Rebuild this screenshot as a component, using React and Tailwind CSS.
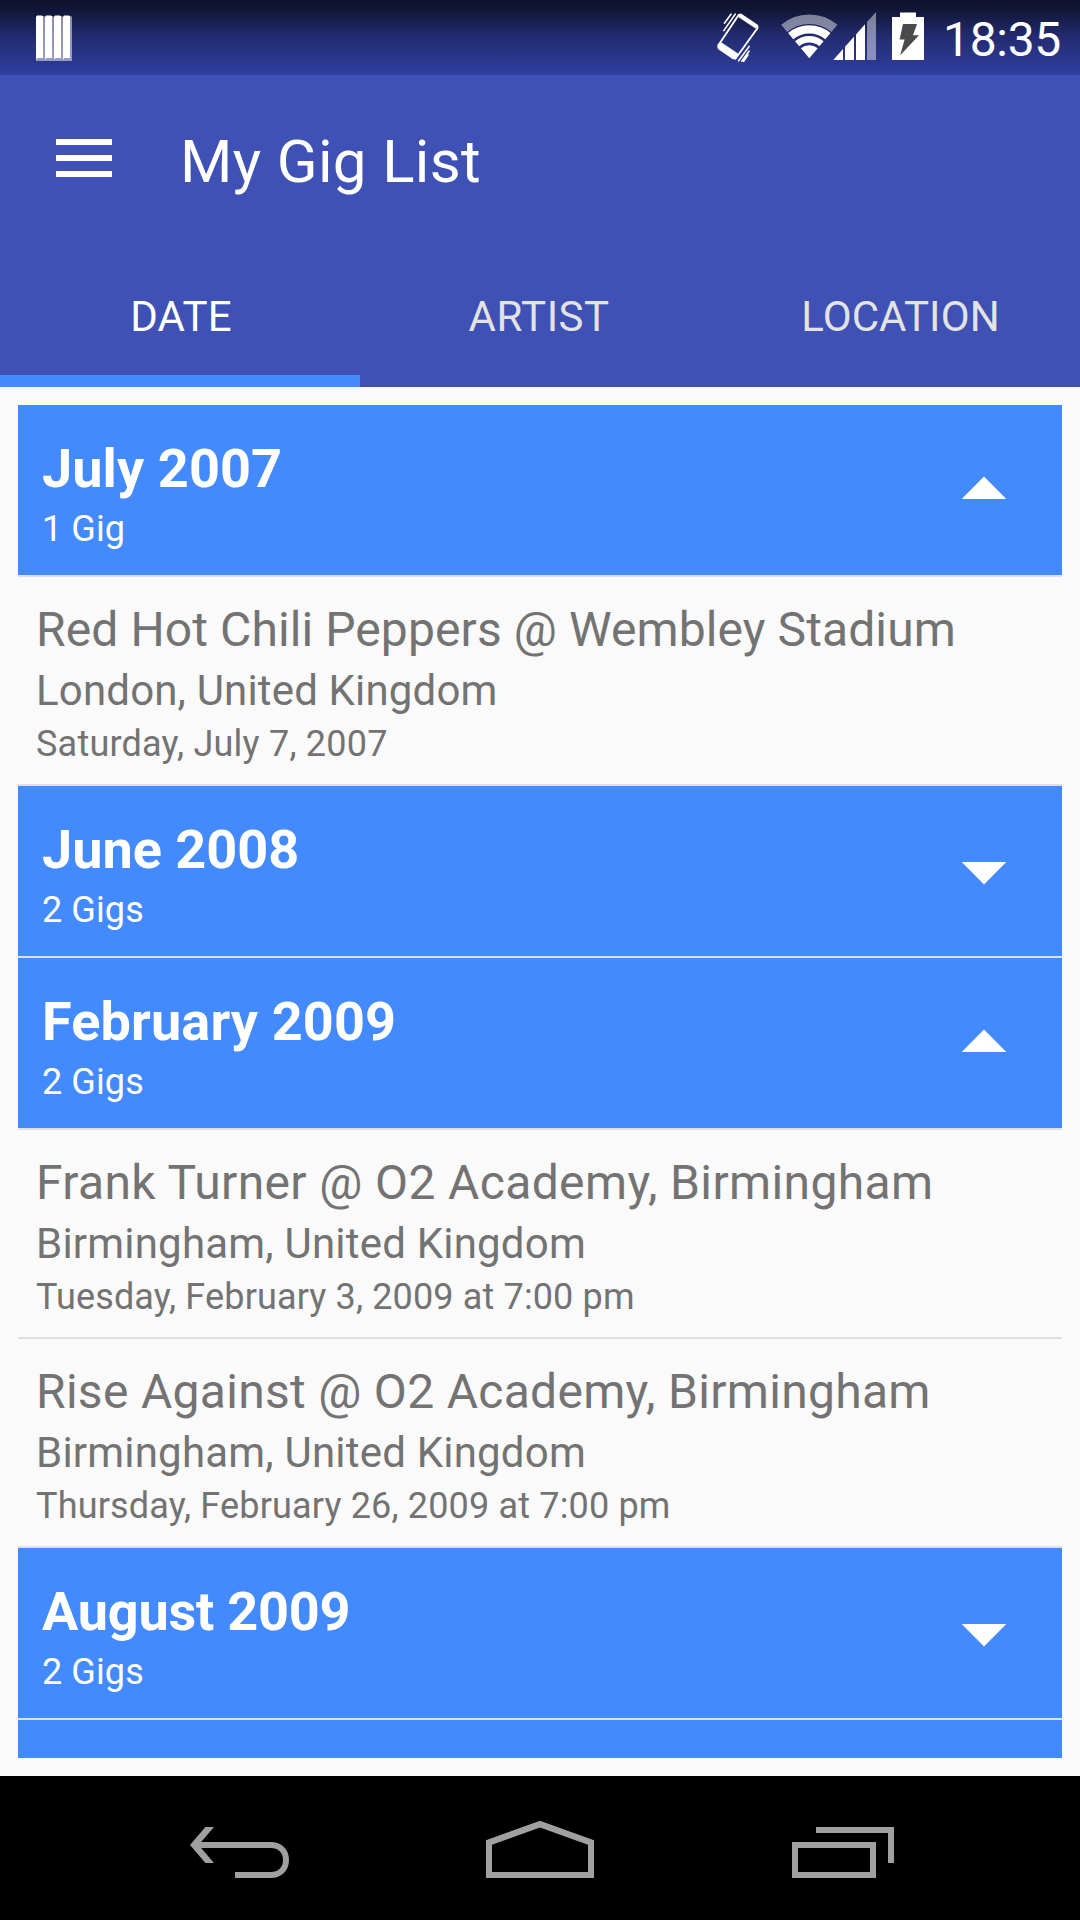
const groups = [
  { title: "July 2007", tracking: "tracking-[0.1px]", count: "1 Gig", open: true, gigs: [
    { name: "Red Hot Chili Peppers @ Wembley Stadium", nameTracking: "tracking-[0.1px]", place: "London, United Kingdom", placeTracking: "tracking-[0.17px]", date: "Saturday, July 7, 2007", dateTracking: "tracking-[0.22px]" },
  ] },
  { title: "June 2008", tracking: "tracking-[0px]", count: "2 Gigs", open: false, gigs: [] },
  { title: "February 2009", tracking: "tracking-[0.14px]", count: "2 Gigs", open: true, gigs: [
    { name: "Frank Turner @ O2 Academy, Birmingham", nameTracking: "tracking-[0.37px]", place: "Birmingham, United Kingdom", placeTracking: "tracking-[0.21px]", date: "Tuesday, February 3, 2009 at 7:00 pm", dateTracking: "tracking-[0.14px]" },
    { name: "Rise Against @ O2 Academy, Birmingham", nameTracking: "tracking-[0.3px]", place: "Birmingham, United Kingdom", placeTracking: "tracking-[0.21px]", date: "Thursday, February 26, 2009 at 7:00 pm", dateTracking: "tracking-[0.16px]" },
  ] },
  { title: "August 2009", tracking: "tracking-[-0.22px]", count: "2 Gigs", open: false, gigs: [] },
];

const tabs = [
  { label: "DATE", active: true, tracking: "tracking-[0.15px] pl-0.5" },
  { label: "ARTIST", active: false, tracking: "tracking-[0.45px] pr-0.5" },
  { label: "LOCATION", active: false, tracking: "tracking-[0.1px] pl-px" },
];

function BarsIcon() {
  return (
    <svg className="mt-[15px] h-[46px] w-9" viewBox="0 0 36 46">
      {[0, 9, 18, 27].map((x) => (
        <g key={x}>
          <path d={`M${x + 1} 1H${x + 8}L${x + 9} 2V46H${x}V44Z`} fill="#fff" fillOpacity="0.5" />
          <path d={`M${x + 1} 0.5H${x + 6}L${x + 7} 1.5V43H${x + 1.5}L${x} 44.5V2Z`} fill="#fff" />
        </g>
      ))}
    </svg>
  );
}

function VibrateIcon() {
  return (
    <svg className="h-[75px] w-12" viewBox="714 0 48 75" fill="none" stroke="#fff" strokeLinejoin="round">
      <path d="M740.8 14.6L757.2 25.6L757.6 28L735.8 58.2L733.5 58.2L718.6 47.8L718.4 45.2L738.6 15Z" strokeWidth="1.9" />
      <path d="M740 14.2L757.6 26L755.6 27.8L739 16.8Z" fill="#fff" strokeWidth="1.2" />
      <path d="M718.2 45L721.6 43.2L738 54.2L735.6 58.8L732.6 58.2L718.4 48.4Z" fill="#fff" strokeWidth="1.2" />
      <path d="M731 14.2L724.4 23.2M735.2 14.2L723.8 30.6" strokeWidth="1.6" strokeLinecap="round" />
      <path d="M749.2 46.4L738.6 60.8M749 51.2L741.8 61.2M748 54.8L743.6 61.4" strokeWidth="1.6" strokeLinecap="round" />
    </svg>
  );
}

function NetworkIcons() {
  return (
    <svg className="ml-[18px] h-[75px] w-[97px]" viewBox="780 0 97 75" fill="none" stroke="#fff">
      <path d="M784.2 28.4A39 39 0 0 1 834.4 28.4" strokeWidth="9.4" strokeOpacity="0.45" />
      <path d="M790.7 36.1A29 29 0 0 1 827.9 36.1" strokeWidth="8.2" />
      <path d="M797.1 43.7A19 19 0 0 1 821.5 43.7" strokeWidth="6.6" />
      <path d="M809.3 58.3L800.9 48.3A13 13 0 0 1 817.7 48.3Z" fill="#fff" stroke="none" />
      <g fill="#fff" stroke="none">
        <path d="M833.3 60L843 49.1V60Z" />
        <path d="M845 46.8L854 36.7V60H845Z" />
        <path d="M856 34.5L865 24.3V60H856Z" />
        <path d="M867 22.1L876 12V60H867Z" fillOpacity="0.45" />
      </g>
    </svg>
  );
}

function BatteryIcon() {
  return (
    <svg className="ml-[15px] h-[75px] w-8" viewBox="892 0 32 75">
      <path d="M900 12.5H916V17H924V60H892V17H900Z" fill="#fff" />
      <path d="M903 24H917L913 35.2H919L900.2 55.3L904.6 39.4H899.6Z" fill="#4a4a4a" />
    </svg>
  );
}

function Group({ group }) {
  return (
    <>
      <div className="flex h-[172px] shrink-0 justify-between border-b-2 border-[#e0e0e0] bg-[#448aff] pl-6 text-white">
        <div className="pt-8">
          <h2 className={`text-[54px] leading-[64px] font-bold ${group.tracking}`}>{group.title}</h2>
          <p className="mt-[7px] text-[36px] leading-[42px] tracking-[0.1px]">{group.count}</p>
        </div>
        <svg className={group.open ? "mt-[71px] mr-[55px] h-[23px] w-[46px]" : "mt-[76px] mr-[55px] h-[23px] w-[46px]"} viewBox="0 0 46 23" fill="#fff">
          <path d={group.open ? "M0.7 23L23 0.5L45.3 23Z" : "M0.7 0H45.3L23 22.5Z"} />
        </svg>
      </div>
      {group.gigs.map((gig) => (
        <div key={gig.name} className="h-[209px] shrink-0 border-b-2 border-[#e0e0e0] pt-[25px] pl-[18px] whitespace-nowrap text-[#737373]">
          <h3 className={`text-[48px] leading-[56px] ${gig.nameTracking}`}>{gig.name}</h3>
          <p className={`mt-2 text-[42px] leading-[50px] ${gig.placeTracking}`}>{gig.place}</p>
          <p className={`mt-[7px] text-[36px] leading-[42px] ${gig.dateTracking}`}>{gig.date}</p>
        </div>
      ))}
    </>
  );
}

export default function App() {
  return (
    <div className="flex h-[1920px] w-[1080px] flex-col overflow-hidden bg-[#fafafa] font-[Roboto,sans-serif]">
      <div className="flex h-[75px] shrink-0 justify-between bg-linear-to-b from-[#0e122c] from-5% via-[#232c72] via-50% to-[#303f9f] to-100% pl-9">
        <BarsIcon />
        <div className="flex">
          <VibrateIcon />
          <NetworkIcons />
          <BatteryIcon />
          <span className="ml-[19px] w-[137px] pt-3 text-[48px] leading-[56px] tracking-[-0.3px] text-white">18:35</span>
        </div>
      </div>

      <header className="flex h-[312px] shrink-0 flex-col justify-between bg-[#3f51b5] text-white">
        <div className="flex pt-16 pl-14">
          <div className="flex w-14 flex-col gap-2.5">
            <div className="h-1.5 bg-white" />
            <div className="h-1.5 bg-white" />
            <div className="h-1.5 bg-white" />
          </div>
          <h1 className="-mt-3 ml-[68px] text-[60px] leading-[70px] tracking-[0.35px]">My Gig List</h1>
        </div>
        <nav className="grid h-[106px] grid-cols-3 text-center">
          {tabs.map((tab) => (
            <div key={tab.label} className={tab.active ? "border-b-12 border-[#448aff] pt-[11px] text-white" : "pt-[11px] text-[#e3e3e3]"}>
              <span className={`block text-[42px] leading-[50px] ${tab.tracking}`}>{tab.label}</span>
            </div>
          ))}
        </nav>
      </header>

      <main className="m-[18px] flex min-h-0 flex-1 flex-col overflow-hidden">
        {groups.map((group) => <Group key={group.title} group={group} />)}
        <div className="flex-1 bg-[#448aff]" />
      </main>

      <footer className="flex h-36 shrink-0 justify-between bg-black px-[186px] pt-[42px]">
        <svg className="h-[62px] w-[108px]" viewBox="186 1818 108 62">
          <path d="M198 1845H270.5C280 1845 286 1851 286 1860C286 1869 280 1875 270.5 1875H235" fill="none" stroke="#a0a0a0" strokeWidth="6" />
          <path d="M190 1845L205.4 1827H214L198.6 1845L214 1863H205.4Z" fill="#a0a0a0" />
        </svg>
        <svg className="h-[62px] w-[108px]" viewBox="486 1818 108 62">
          <path fillRule="evenodd" d="M486 1840.2L540 1820.7L594 1840.2V1878H486ZM492 1844.8V1872H588V1844.8L540 1827.4Z" fill="#a0a0a0" />
        </svg>
        <svg className="h-[62px] w-[108px]" viewBox="786 1818 108 62" fill="none" stroke="#a0a0a0" strokeWidth="6">
          <path d="M795 1845H873V1875H795Z" />
          <path d="M816 1830H891V1863" />
        </svg>
      </footer>
    </div>
  );
}
